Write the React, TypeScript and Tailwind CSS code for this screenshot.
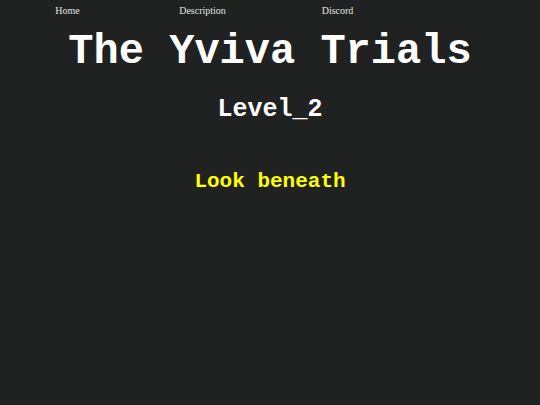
export default function App() {
  const links = ['Home', 'Description', 'Discord', ''];

  return (
    <div className="min-h-screen bg-[#202221] text-white">
      <nav className="grid grid-cols-4 pt-[6px] font-['Liberation_Serif',serif] text-[10px] leading-none text-[#e2e2e2]">
        {links.map((label, i) => (
          <a key={i} href="#" className="text-center">
            {label}
          </a>
        ))}
      </nav>

      <main className="flex flex-col items-center font-['Liberation_Mono',monospace] font-bold">
        <h1 className="mt-[15px] text-[42px] leading-none">The Yviva Trials</h1>
        <h2 className="mt-[24px] text-[25px] leading-none">Level_2</h2>
        <p className="mt-[49px] text-[21px] leading-none text-[#ffff00]">Look beneath</p>
      </main>
    </div>
  );
}
